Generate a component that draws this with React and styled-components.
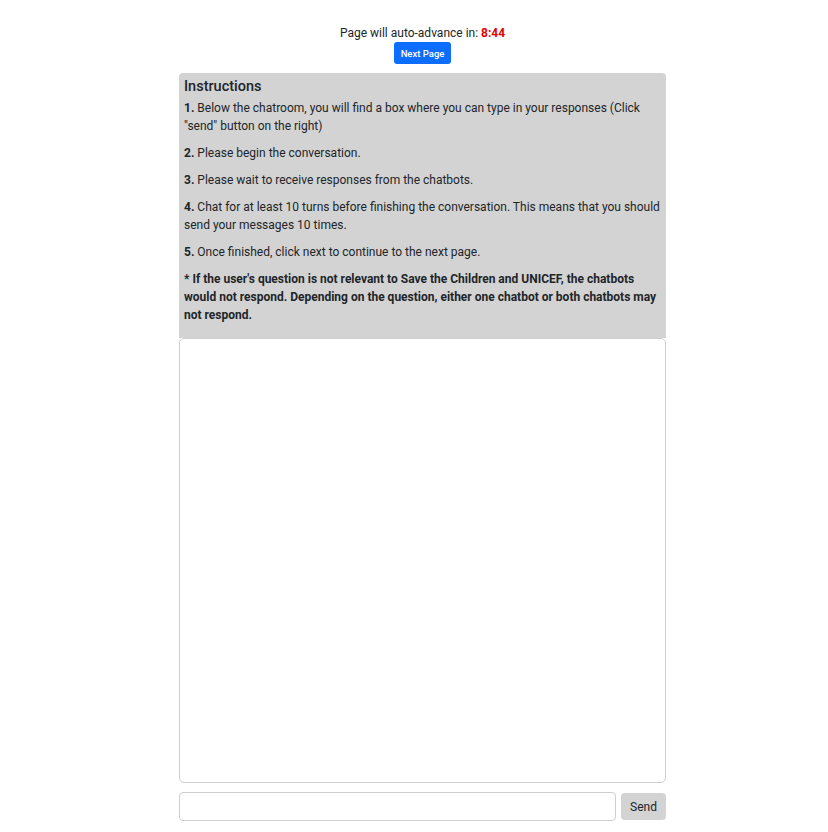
import React from "react";
import styled, { createGlobalStyle } from "styled-components";

const Global = createGlobalStyle`
  html, body { margin: 0; padding: 0; background: #fff; }
  body { font-family: Roboto, "Noto Sans", Arial, sans-serif; color: #212529; }
  * { box-sizing: border-box; }
`;

const Page = styled.div`
  width: 828px;
  height: 832px;
  display: flex;
  flex-direction: column;
  align-items: center;
  padding-top: 25px;
  padding-left: 17px;
`;

const TimerLine = styled.div`
  font-size: 12px;
  line-height: 17px;
  color: #212529;
`;

const Time = styled.span`
  color: #e00000;
  font-weight: 700;
`;

const NextButton = styled.button`
  margin-top: 0;
  height: 22px;
  width: 57px;
  padding: 0;
  border: none;
  border-radius: 3px;
  background: #0d6efd;
  color: #fff;
  font-family: Roboto, Arial, sans-serif;
  font-size: 9.5px;
  font-weight: 500;
`;

const Column = styled.div`
  width: 487px;
  margin-top: 9px;
  display: flex;
  flex-direction: column;
`;

const Instructions = styled.div`
  background: #d3d3d3;
  border-radius: 4px 4px 0 0;
  padding: 4px 5px 14px 5px;
`;

const Heading = styled.h3`
  margin: 0 0 2px 0;
  font-size: 14.5px;
  font-weight: 500;
  line-height: 20px;
  color: #212529;
`;

const Para = styled.p`
  margin: 0 0 9px 0;
  font-size: 12px;
  line-height: 18px;
  font-weight: ${(p) => (p.$bold ? 700 : 400)};
  &:last-child { margin-bottom: 0; }
`;

const ChatBox = styled.div`
  height: 445px;
  border: 1px solid #cfcfcf;
  border-radius: 5px;
  background: #fff;
`;

const InputRow = styled.div`
  margin-top: 9px;
  display: flex;
  gap: 5px;
  align-items: center;
`;

const TextInput = styled.input`
  flex: 1;
  height: 29px;
  border: 1px solid #cfcfcf;
  border-radius: 4px;
  outline: none;
`;

const SendButton = styled.button`
  width: 45px;
  height: 27px;
  border: none;
  border-radius: 4px;
  background: #d3d3d3;
  color: #212529;
  font-family: Roboto, Arial, sans-serif;
  font-size: 12px;
  padding: 0;
`;

export default function App() {
  return (
    <>
      <Global />
      <Page>
        <TimerLine>
          Page will auto-advance in: <Time>8:44</Time>
        </TimerLine>
        <NextButton>Next Page</NextButton>
        <Column>
          <Instructions>
            <Heading>Instructions</Heading>
            <Para>
              <b>1.</b> Below the chatroom, you will find a box where you can type in your responses (Click "send" button on the right)
            </Para>
            <Para>
              <b>2.</b> Please begin the conversation.
            </Para>
            <Para>
              <b>3.</b> Please wait to receive responses from the chatbots.
            </Para>
            <Para>
              <b>4.</b> Chat for at least 10 turns before finishing the conversation. This means that you should send your messages 10 times.
            </Para>
            <Para>
              <b>5.</b> Once finished, click next to continue to the next page.
            </Para>
            <Para $bold>
              * If the user's question is not relevant to Save the Children and UNICEF, the chatbots would not respond. Depending on the question, either one chatbot or both chatbots may not respond.
            </Para>
          </Instructions>
          <ChatBox />
          <InputRow>
            <TextInput />
            <SendButton>Send</SendButton>
          </InputRow>
        </Column>
      </Page>
    </>
  );
}
